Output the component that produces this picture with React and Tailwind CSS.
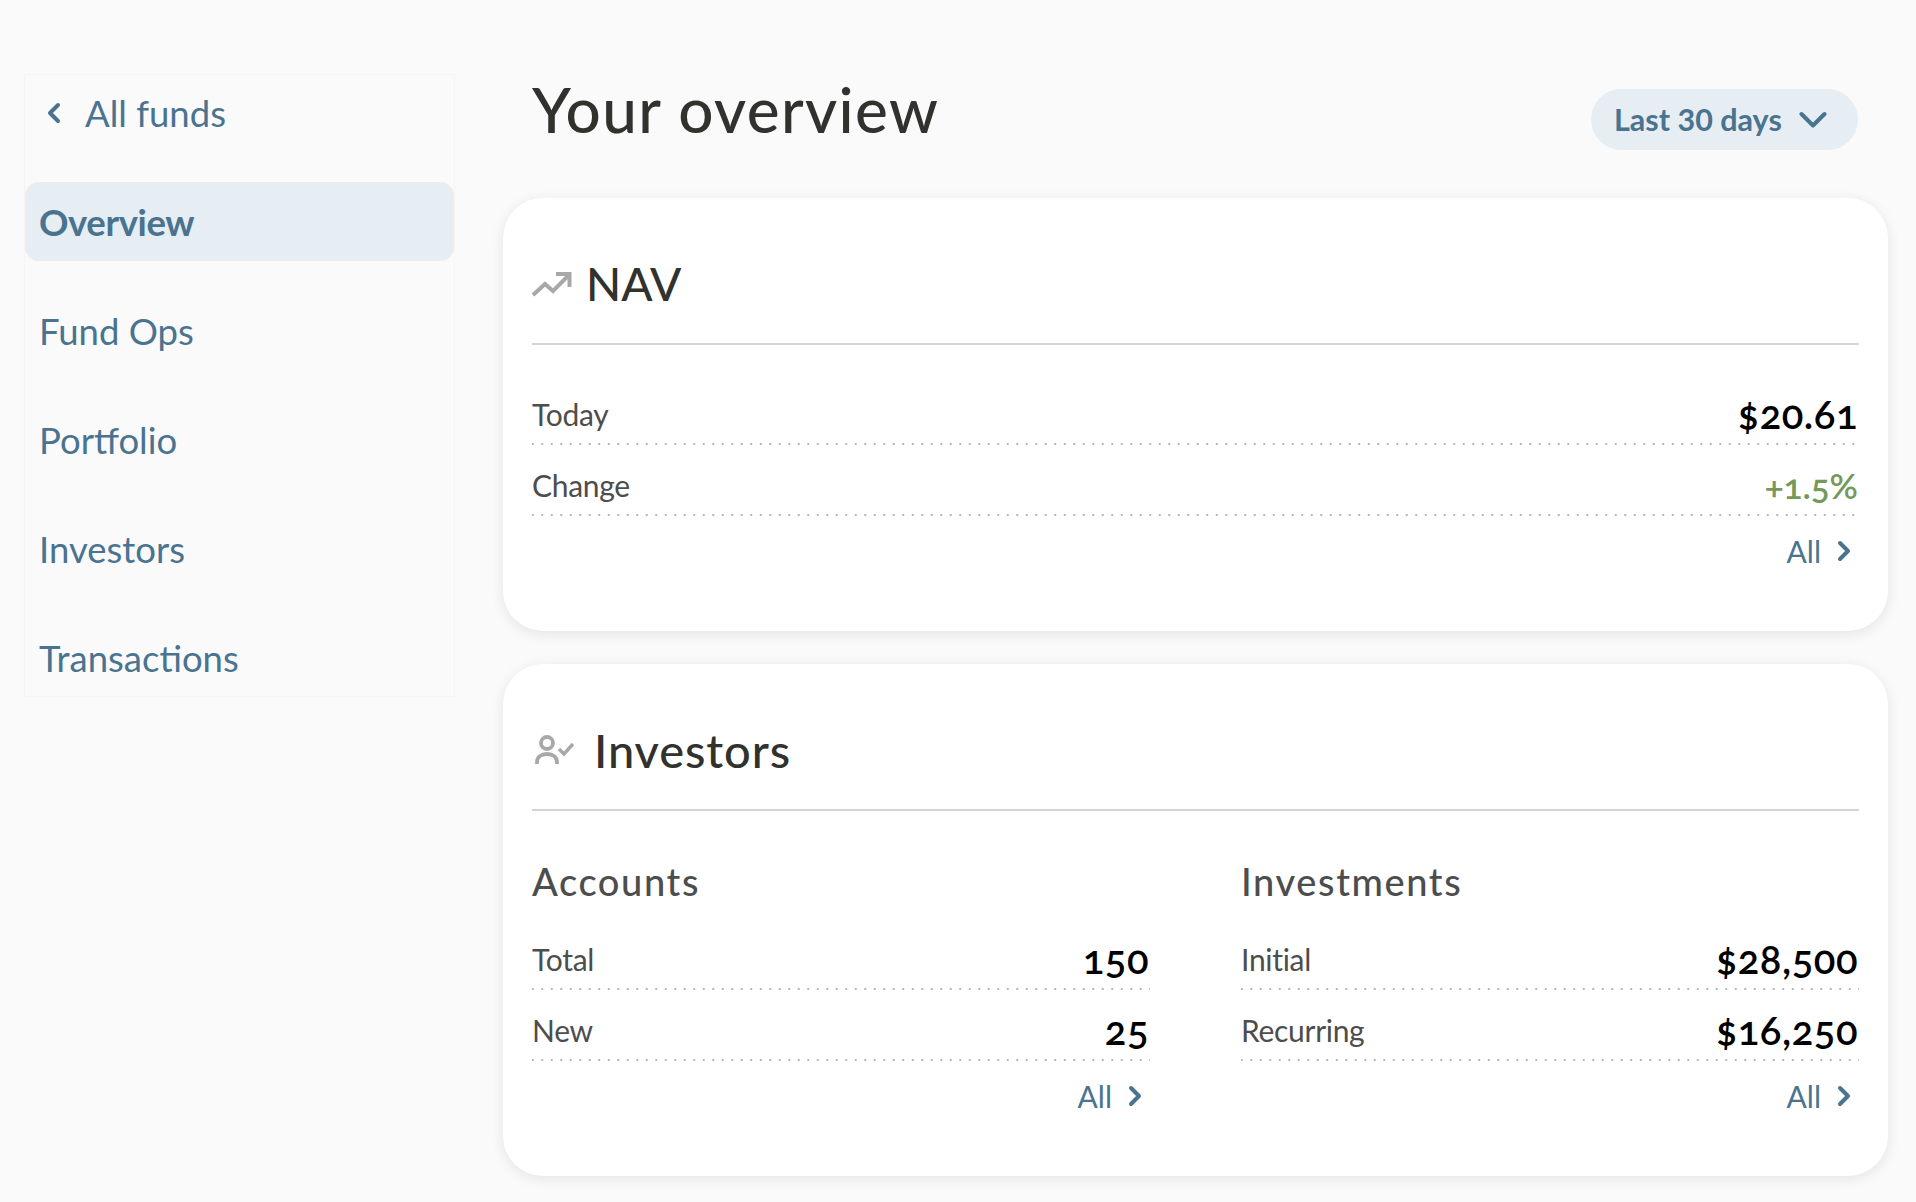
import React from "react";

const BLUE = "text-[#4a7390]";

function ChevronRight() {
  return (
    <svg width="14" height="22" viewBox="0 0 14 22" fill="none" stroke="#4a7390" strokeWidth="4" strokeLinecap="round" strokeLinejoin="round">
      <path d="M3 3l8 8-8 8" />
    </svg>
  );
}

function Row({ label, value, green }) {
  return (
    <div className="h-[71px] flex flex-col">
      <div className="flex-1 flex items-center justify-between pt-[11px] pr-[1px]">
        <span className="text-[30px] leading-none text-[#4d4d4d] tracking-[-0.3px]">{label}</span>
        <span className={`leading-none oldstyle-nums ${green ? "text-[35px] font-semibold text-[#74995a] pt-[1px]" : "text-[40px] tracking-[0.5px] font-semibold text-black"}`}>{value}</span>
      </div>
      <div className="h-[2px] bg-[radial-gradient(circle,#b5b5b5_1px,transparent_1.2px)] bg-[length:9.5px_2px] bg-[position:-4px_0] bg-repeat-x"></div>
    </div>
  );
}

function AllLink() {
  return (
    <div className="flex justify-end items-center gap-[16px] pr-[8px] h-[70px]">
      <span className={`text-[30px] leading-none ${BLUE}`}>All</span>
      <ChevronRight />
    </div>
  );
}

function CardHeader({ icon, title, gap, titleClass }) {
  return (
    <div className={`flex items-center h-[147px] pt-[27px] border-b-2 border-[#d4d4d4] ${gap}`}>
      {icon}
      <h2 className={`leading-none text-[#31312d] font-medium ${titleClass}`}>{title}</h2>
    </div>
  );
}

function Card({ children, className }) {
  return (
    <section className={`bg-white rounded-[40px] px-[29px] shadow-[0_3px_14px_rgba(0,0,0,0.09)] ${className}`}>
      {children}
    </section>
  );
}

function Column({ title, rows }) {
  return (
    <div>
      <h3 className="text-[38px] leading-none tracking-[1.6px] text-[#4d4d4d] font-medium h-[57px]">{title}</h3>
      {rows.map((r) => (
        <Row key={r[0]} label={r[0]} value={r[1]} />
      ))}
      <AllLink />
    </div>
  );
}

export default function App() {
  const nav = ["Fund Ops", "Portfolio", "Investors", "Transactions"];
  return (
    <div className="w-[1916px] h-[1202px] overflow-hidden bg-[#fafafa] flex font-['Lato',sans-serif]">
      <aside className="w-[431px] h-[623px] mt-[74px] ml-[24px] border border-[#f5f5f5] shrink-0">
        <div className="flex items-center h-[74px] pl-[22px] gap-[24px] mb-[33px] pt-[2px]">
          <svg width="14" height="22" viewBox="0 0 14 22" fill="none" stroke="#4a7390" strokeWidth="4" strokeLinecap="round" strokeLinejoin="round">
            <path d="M11 3l-8 8 8 8" />
          </svg>
          <span className={`text-[36.5px] leading-none ${BLUE}`}>All funds</span>
        </div>
        <div className={`h-[79px] bg-[#e6edf3] rounded-[14px] flex items-center pl-[14px] pt-[2px] text-[36.5px] font-bold ${BLUE} tracking-[-0.4px]`}>
          Overview
        </div>
        {nav.map((n) => (
          <div key={n} className={`h-[79px] mt-[30px] flex items-center pl-[14px] pt-[2px] text-[36.5px] ${BLUE}`}>{n}</div>
        ))}
      </aside>

      <main className="w-[1385px] ml-[48px] shrink-0">
        <header className="h-[124px] pl-[29px] pr-[30px] flex justify-between items-start">
          <h1 className="mt-[74px] text-[62px] leading-[70px] tracking-[1.4px] text-[#31312d] font-medium">Your overview</h1>
          <button className={`mt-[89px] w-[267px] h-[61px] rounded-full bg-[#e6edf3] flex items-center pl-[23px] gap-[17px] text-[30.5px] font-bold ${BLUE}`}>
            Last 30 days
            <svg width="28" height="18" viewBox="0 0 28 18" fill="none" stroke="#4a7390" strokeWidth="4" strokeLinecap="round" strokeLinejoin="round">
              <path d="M2.5 3L14 14.5 25.500 3" />
            </svg>
          </button>
        </header>

        <div className="mt-[74px]">
          <Card className="h-[433px]">
            <CardHeader
              gap="gap-[14px]"
              title="NAV"
              titleClass="text-[46px]"
              icon={
                <svg width="40" height="26" viewBox="0 0 40 26" fill="none" stroke="#a8a8a8" strokeWidth="4" strokeLinejoin="miter">
                  <path d="M1 24l12-11 8 7L37 4" />
                  <path d="M24 3h13.5v13" />
                </svg>
              }
            />
            <div className="pt-[29px]">
              <Row label="Today" value="$20.61" />
              <Row label="Change" value="+1.5%" green />
              <AllLink />
            </div>
          </Card>

          <Card className="h-[512px] mt-[33px]">
            <CardHeader
              gap="gap-[20px] pl-[3px]"
              title="Investors"
              titleClass="text-[47px] tracking-[0.9px]"
              icon={
                <svg width="39" height="30" viewBox="0 0 39 30" fill="none" stroke="#a8a8a8" strokeWidth="3.8">
                  <circle cx="12" cy="8" r="6" />
                  <path d="M2 29v-2c0-5 4-8 10-8s10 3 10 8v2" />
                  <path d="M24 14l5 5 9-10" strokeWidth="3.400" />
                </svg>
              }
            />
            <div className="grid grid-cols-2 gap-x-[91px] pt-[51px]">
              <Column title="Accounts" rows={[["Total", "150"], ["New", "25"]]} />
              <Column title="Investments" rows={[["Initial", "$28,500"], ["Recurring", "$16,250"]]} />
            </div>
          </Card>
        </div>
      </main>
    </div>
  );
}
